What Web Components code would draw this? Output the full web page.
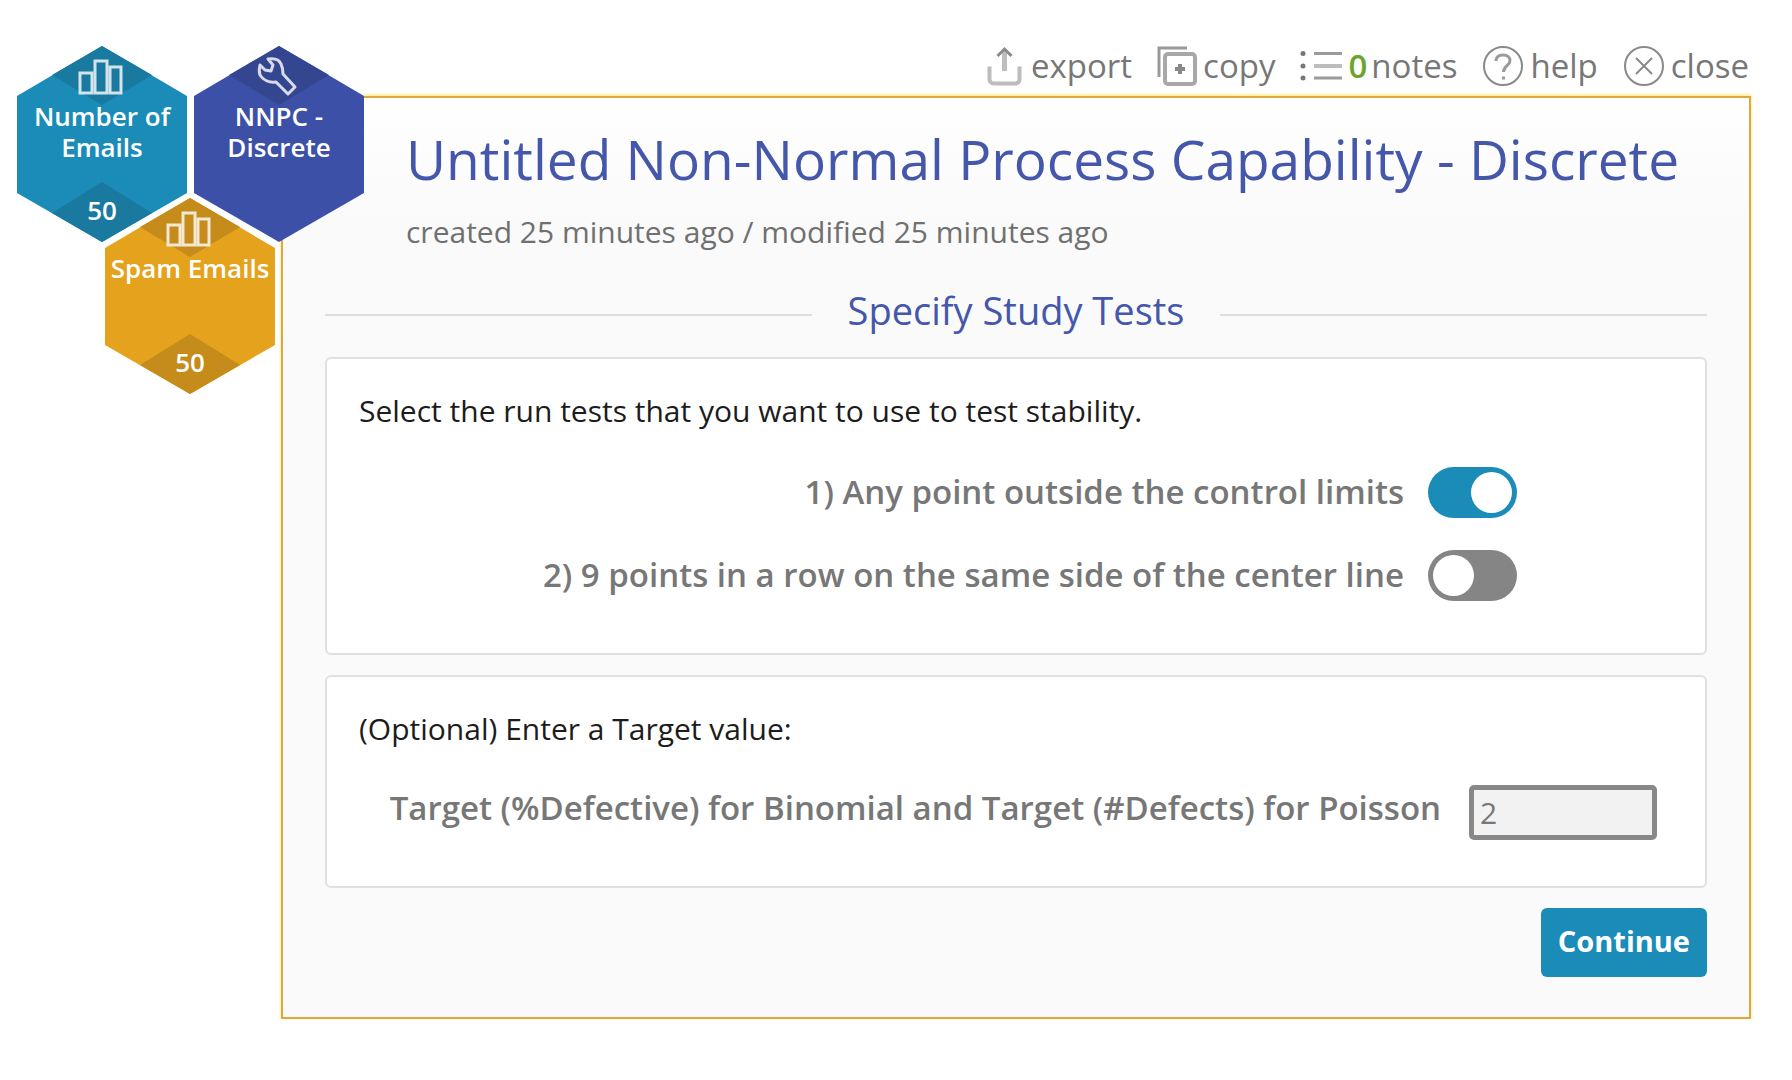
<!DOCTYPE html>
<html lang="en">
<head>
<meta charset="utf-8">
<title>Non-Normal Process Capability</title>
<style>
  body { margin: 0; background: #fff; font-family: "Open Sans", "Noto Sans", sans-serif; color: #777; }
</style>
</head>
<body>
<study-app></study-app>

<template id="tpl-app">
  <style>
    :host { display: block; position: relative; padding: 0 41px 60px 281px; }
    hex-tile { position: absolute; }
    .emails { left: 17px; top: 46px; --fill: #1b8cb8; --shade: #19799f; }
    .tool { left: 194px; top: 46px; --fill: #3c50a8; --shade: #354690; }
    .spam { left: 105px; top: 198px; --fill: #e5a21c; --shade: #c58b1b; }
    .intro { margin: 0 2px; font-size: 30px; line-height: 40px; color: #1c1c1c; }
    footer { display: flex; justify-content: flex-end; }
  </style>
  <tool-bar></tool-bar>
  <study-panel heading="Untitled Non-Normal Process Capability - Discrete" meta="created 25 minutes ago / modified 25 minutes ago">
    <section-title>Specify Study Tests</section-title>
    <form-card>
      <p class="intro">Select the run tests that you want to use to test stability.</p>
      <toggle-row on>1) Any point outside the control limits</toggle-row>
      <toggle-row>2) 9 points in a row on the same side of the center line</toggle-row>
    </form-card>
    <form-card>
      <p class="intro">(Optional) Enter a Target value:</p>
      <field-row value="2">Target (%Defective) for Binomial and Target (#Defects) for Poisson</field-row>
    </form-card>
    <footer><primary-button>Continue</primary-button></footer>
  </study-panel>
  <hex-tile class="emails" icon="bars" count="50">Number of Emails</hex-tile>
  <hex-tile class="tool" icon="wrench">NNPC - Discrete</hex-tile>
  <hex-tile class="spam" icon="bars" count="50">Spam Emails</hex-tile>
</template>

<template id="tpl-toolbar">
  <style>
    :host { display: flex; justify-content: flex-end; align-items: center; gap: 25px; height: 61px; padding: 35px 2px 0 0; }
    button { display: flex; align-items: center; gap: 6px; border: 0; padding: 0; background: none; font: 33px/44px "Open Sans", sans-serif; color: #777; cursor: pointer; }
    svg { display: block; height: 42px; fill: none; stroke: #8a8a8a; stroke-width: 2; }
    b { color: #6ba52c; font-weight: 600; }
    .count { display: flex; gap: 4px; }
  </style>
  <button type="button">
    <svg width="38" height="42" viewBox="0 0 38 42"><path d="M2.500 21.500v13a4 4 0 0 0 4 4h22a4 4 0 0 0 4-4v-13" stroke="#bdbdbd" stroke-width="4"/><path d="M17.500 26V6" stroke="#bdbdbd" stroke-width="5"/><path d="M10.500 11l7-7 7 7" stroke-width="3"/></svg>
    <span>export</span>
  </button>
  <button type="button">
    <svg width="40" height="42" viewBox="0 0 40 42"><path d="M2 32V3h28" stroke="#9a9a9a" stroke-width="3"/><rect x="8" y="9" width="30" height="30" rx="3" stroke="#a8a8a8" stroke-width="4"/><path d="M23 19v10M18 24h10" stroke="#888" stroke-width="4"/></svg>
    <span>copy</span>
  </button>
  <button type="button">
    <svg width="42" height="42" viewBox="0 0 42 42"><path d="M14 8.500h28M14 33h28" stroke="#9a9a9a" stroke-width="3"/><path d="M14 21h28" stroke="#bdbdbd" stroke-width="4"/><g fill="#777" stroke="none"><circle cx="3" cy="8.500" r="2.500"/><circle cx="3" cy="21" r="2.500"/><circle cx="3" cy="33" r="2.500"/></g></svg>
    <span class="count"><b>0</b><span>notes</span></span>
  </button>
  <button type="button">
    <svg width="42" height="42" viewBox="0 0 42 42"><circle cx="21" cy="21" r="19"/><path d="M14 16c0-3.500 2.500-6 7-6s7 2.500 7 5.500c0 5-6.500 5.500-6.500 11.500M21.500 31.500v3" stroke-width="3" stroke="#9a9a9a"/></svg>
    <span>help</span>
  </button>
  <button type="button">
    <svg width="42" height="42" viewBox="0 0 42 42"><circle cx="21" cy="21" r="19"/><path d="M13 13l16 16M29 13L13 29"/></svg>
    <span>close</span>
  </button>
</template>

<template id="tpl-panel">
  <style>
    :host { display: block; border: 2px solid #dfa83f; box-shadow: 0 -1px 2px 1px #fdf0a4; padding: 31px 42px 40px; background: linear-gradient(#fff, #fafafa 120px); }
    header { padding-left: 81px; margin-bottom: 32px; }
    h1 { margin: 0 0 23px; font-weight: 400; font-size: 55px; line-height: 60px; color: #4457ab; }
    p { margin: 0; font-size: 30px; line-height: 40px; color: #707070; }
  </style>
  <header><h1></h1><p></p></header>
  <slot></slot>
</template>

<template id="tpl-section">
  <style>
    :host { display: flex; align-items: center; gap: 36px; margin-bottom: 21px; }
    i { flex: 1; height: 2px; margin-top: 10px; background: #dedede; }
    h2 { margin: 0; font-weight: 400; font-size: 38px; line-height: 52px; color: #4457ab; }
  </style>
  <i></i><h2><slot></slot></h2><i></i>
</template>

<template id="tpl-card">
  <style>
    :host { display: block; margin-bottom: 20px; padding: 32px 30px 46px; border: 2px solid #e0e0e0; border-radius: 6px; background: #fff; }
  </style>
  <slot></slot>
</template>

<template id="tpl-toggle">
  <style>
    :host { display: flex; justify-content: flex-end; gap: 24px; margin: 36px 158px 0 0; }
    :host(:not([on])) { margin: 32px 158px 6px 0; }
    label { font-size: 33px; line-height: 49px; font-weight: 600; }
    input { appearance: none; flex: none; box-sizing: border-box; width: 89px; height: 51px; margin: 0; padding: 5px; border-radius: 26px; background: #858585; cursor: pointer; }
    input::before { content: ""; display: block; width: 41px; height: 41px; border-radius: 50%; background: #fff; }
    input:checked { background: #1b8cb8; }
    input:checked::before { margin-left: auto; }
  </style>
  <label for="t"><slot></slot></label><input id="t" type="checkbox">
</template>

<template id="tpl-field">
  <style>
    :host { display: flex; justify-content: flex-end; gap: 28px; margin: 36px 18px 0 0; }
    label { font-size: 33px; line-height: 45px; font-weight: 600; }
    input { box-sizing: border-box; width: 188px; height: 55px; margin: 0; padding: 0 6px; border: 5px solid #888; border-radius: 5px; background: #f2f2f2; font: 30px "Open Sans", sans-serif; color: #777; outline: none; }
  </style>
  <label for="v"><slot></slot></label><input id="v" type="text">
</template>

<template id="tpl-button">
  <style>
    :host { display: block; }
    button { height: 69px; padding: 0 17px 4px; border: 0; border-radius: 6px; background: #1b8cb8; color: #fff; font: 700 29px "Open Sans", sans-serif; cursor: pointer; }
  </style>
  <button type="button"><slot></slot></button>
</template>

<template id="tpl-hex">
  <style>
    :host { display: flex; flex-direction: column; justify-content: space-between; box-sizing: border-box; width: 170px; height: 196px; padding: 55px 0 16px; text-align: center; font-size: 26px; line-height: 31px; font-weight: 600; color: #fff; isolation: isolate; }
    svg { position: absolute; left: 0; top: 0; z-index: -1; overflow: visible; }
    .body { fill: var(--fill); }
    .rim { fill: #fff; stroke: #fff; stroke-width: 8; }
    .shade { fill: var(--shade); }
    .icon { fill: none; stroke: #fff; stroke-opacity: .8; stroke-width: 3; }
    .icon g { display: none; }
    :host([icon="bars"]) .bars, :host([icon="wrench"]) .wrench { display: inline; }
    :host(:not(.spam)) .rim, :host(:not([count])) .low { display: none; }
  </style>
  <svg width="170" height="196" viewBox="0 0 170 196">
    <polygon class="rim" points="85,0 170,50 170,147 85,196 0,147 0,50"/>
    <polygon class="body" points="85,0 170,50 170,147 85,196 0,147 0,50"/>
    <polygon class="shade" points="85,0 135,29 85,59 35,29"/>
    <polygon class="shade low" points="85,136 135,167 85,196 35,167"/>
    <g class="icon">
      <g class="bars"><rect x="63" y="27" width="12" height="20"/><rect x="78" y="15" width="12" height="32"/><rect x="93" y="21" width="11" height="26"/></g>
      <g class="wrench" stroke-linejoin="round"><path d="M74 13C80 12 85 13 87 18C89 22 89 24 89 28L101 41L94 48L82 36C75 37 69 34 66 29C65 26 65 23 66 19L71 24L77 25L79 19Z"/></g>
    </g>
  </svg>
  <span><slot></slot></span><span class="count"></span>
</template>

<script>
  class Base extends HTMLElement {
    constructor() {
      super();
      this.attachShadow({ mode: "open" }).append(document.getElementById(this.constructor.tpl).content.cloneNode(true));
    }
    $(s) { return this.shadowRoot.querySelector(s); }
  }
  customElements.define("tool-bar", class extends Base { static tpl = "tpl-toolbar"; });
  customElements.define("study-panel", class extends Base {
    static tpl = "tpl-panel";
    connectedCallback() {
      this.$("h1").textContent = this.getAttribute("heading");
      this.$("p").textContent = this.getAttribute("meta");
    }
  });
  customElements.define("section-title", class extends Base { static tpl = "tpl-section"; });
  customElements.define("form-card", class extends Base { static tpl = "tpl-card"; });
  customElements.define("toggle-row", class extends Base {
    static tpl = "tpl-toggle";
    connectedCallback() { this.$("input").checked = this.hasAttribute("on"); }
  });
  customElements.define("field-row", class extends Base {
    static tpl = "tpl-field";
    connectedCallback() { this.$("input").value = this.getAttribute("value"); }
  });
  customElements.define("primary-button", class extends Base { static tpl = "tpl-button"; });
  customElements.define("hex-tile", class extends Base {
    static tpl = "tpl-hex";
    connectedCallback() { this.$(".count").textContent = this.getAttribute("count") || ""; }
  });
  customElements.define("study-app", class extends Base { static tpl = "tpl-app"; });
</script>
</body>
</html>
